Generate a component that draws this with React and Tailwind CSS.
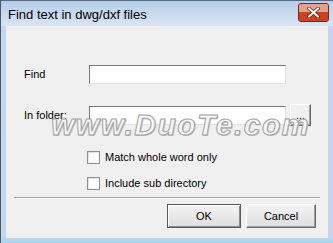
import React from "react";

function CloseButton() {
  return (
    <div className="w-[31px] h-[19px] rounded-[3px] border border-[#6e2d1c] bg-[#cc5636] overflow-hidden flex flex-col relative">
      <div className="h-[8px] bg-[#e3a08b]" />
      <div className="flex-1 bg-[#c8441f]" />
      <svg className="absolute left-[8px] top-[3px]" width="13" height="11" viewBox="0 0 13 11">
        <path d="M2 1.5 L11 9.5 M11 1.5 L2 9.5" stroke="#5a1a0e" strokeWidth="3.6" strokeLinecap="round" />
        <path d="M2 1.5 L11 9.5 M11 1.5 L2 9.5" stroke="#ffffff" strokeWidth="2.2" strokeLinecap="round" />
      </svg>
    </div>
  );
}

function TextBox({ className = "" }) {
  return (
    <div
      className={`h-[19px] bg-white border border-t-[#7a7a7a] border-l-[#7a7a7a] border-b-[#e3e3e3] border-r-[#e3e3e3] ${className}`}
    />
  );
}

function Checkbox({ label }) {
  return (
    <div className="flex items-center h-[13px] ml-[80px]">
      <div className="w-[13px] h-[13px] border border-[#8e8f8f] bg-linear-to-br from-[#dcdcdc] to-white p-[1px]">
        <div className="w-full h-full bg-white" />
      </div>
      <span className="ml-[5px] text-[11px] leading-none text-black">{label}</span>
    </div>
  );
}

function DialogButton({ children, isDefault, className = "" }) {
  return (
    <div
      className={`h-[24px] flex items-center justify-center text-[11px] text-black bg-linear-to-b from-[#f4f4f4] to-[#dedede] ${
        isDefault
          ? "border border-[#5a5a5a] shadow-[inset_1px_1px_0_#ffffff,inset_-1px_-1px_0_#8a8a8a]"
          : "border border-t-[#ffffff] border-l-[#ffffff] border-b-[#696969] border-r-[#696969] shadow-[inset_-1px_-1px_0_#a0a0a0]"
      } ${className}`}
    >
      {children}
    </div>
  );
}

export default function App() {
  return (
    <div
      className="w-[333px] h-[243px] flex flex-col bg-[#c3d6ec] border-l border-l-[#4a5868] overflow-hidden"
      style={{ fontFamily: '"Liberation Sans", Arial, sans-serif' }}
    >
      {/* title bar */}
      <div className="h-[26px] shrink-0 flex items-start justify-between pl-[7px] pr-[4px] bg-linear-to-b from-[#b7cee9] to-[#d8e5f4] border-t border-t-[#5c6c80]">
        <span className="text-[13px] leading-none text-black mt-[7px]">Find text in dwg/dxf files</span>
        <div className="mt-[2px] flex">
          <CloseButton />
        </div>
      </div>

      {/* client */}
      <div className="relative ml-[5px] w-[322px] h-[212px] shrink-0 bg-[#f0f0f0] border-l border-l-[#e8eef6] flex flex-col">
        {/* find row */}
        <div className="flex items-center mt-[39px] pl-[17px]">
          <span className="w-[65px] text-[11px] leading-none text-black">Find</span>
          <TextBox className="w-[197px]" />
        </div>

        {/* folder row */}
        <div className="flex items-center h-[22px] mt-[20px] pl-[17px]">
          <span className="w-[65px] text-[11px] leading-none text-black">In folder:</span>
          <TextBox className="w-[197px]" />
          <div className="ml-[4px] w-[21px] h-[22px] flex items-center justify-center text-[11px] leading-none text-black bg-[#f0f0f0] border border-t-[#ffffff] border-l-[#ffffff] border-b-[#696969] border-r-[#696969] shadow-[inset_-1px_-1px_0_#a0a0a0]">
            ...
          </div>
        </div>

        {/* options */}
        <div className="mt-[25px]">
          <Checkbox label="Match whole word only" />
        </div>
        <div className="mt-[13px]">
          <Checkbox label="Include sub directory" />
        </div>

        {/* separator */}
        <div className="mt-[7px] ml-[7px] w-[306px] h-[2px] border-t border-t-[#a0a0a0] border-b border-b-white" />

        {/* buttons */}
        <div className="flex justify-end gap-[5px] mt-[5px] pr-[12px]">
          <DialogButton isDefault className="w-[74px]">OK</DialogButton>
          <DialogButton className="w-[70px]">Cancel</DialogButton>
        </div>

        {/* watermark */}
        <span className="absolute left-[44px] top-[84px] text-[30px] leading-none font-bold italic tracking-[1.5px] text-[#f6f6f6] [-webkit-text-stroke:1px_#a3a3a3] [text-shadow:1px_1px_0_#bdbdbd] pointer-events-none select-none">
          www.DuoTe.com
        </span>
      </div>

      {/* bottom frame */}
      <div className="flex-1 bg-linear-to-b from-[#c3d6ec] to-[#9fd4ea]" />
    </div>
  );
}
